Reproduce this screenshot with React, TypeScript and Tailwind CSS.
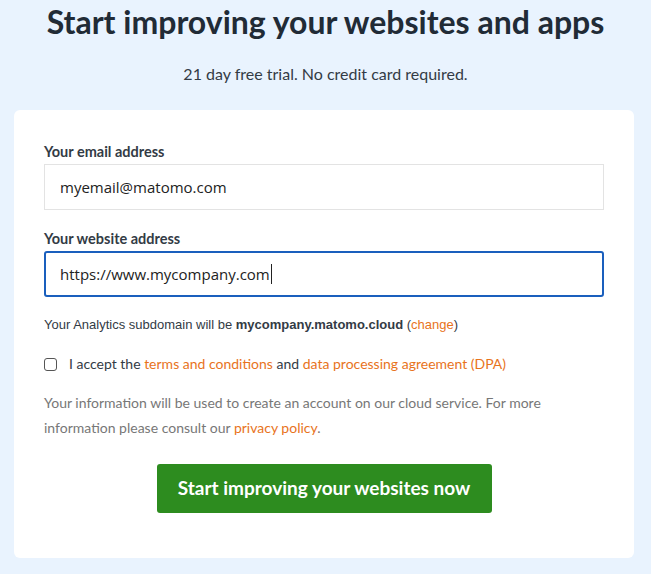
import React from "react";

const App: React.FC = () => {
  return (
    <div className="min-h-[574px] w-full bg-[#e9f3fe] pb-4" style={{ fontFamily: "Lato, 'Open Sans', sans-serif" }}>
      {/* Heading */}
      <h1 className="pt-[1px] text-center text-[32px] font-bold leading-[42px] text-[#212b36]">
        Start improving your websites and apps
      </h1>
      <p className="mt-[21px] text-center text-[16px] leading-[20px] text-[#333b45]">
        21 day free trial. No credit card required.
      </p>

      {/* Card */}
      <div className="ml-[14px] mr-[17px] mt-[26px] h-[448px] rounded-md bg-white px-[30px] pt-[33px]">
        <label className="block text-[14.5px] font-bold leading-[17px] text-[#333b45]">
          Your email address
        </label>
        <div className="mt-[4px] flex h-[46px] w-[560px] items-center border border-[#e3e3e3] px-[15px] text-[15px] text-[#222]" style={{ fontFamily: "'Open Sans', sans-serif" }}>
          myemail@matomo.com
        </div>

        <label className="mt-[20px] block text-[14.5px] font-bold leading-[17px] text-[#333b45]">
          Your website address
        </label>
        <div className="mt-[4px] flex h-[46px] w-[560px] items-center rounded-[3px] border-2 border-[#1a5fbd] px-[14px] text-[15px] text-[#222]" style={{ fontFamily: "'Open Sans', sans-serif" }}>
          https://www.mycompany.com
          <span className="ml-[1px] inline-block h-[20px] w-px bg-[#222]"></span>
        </div>

        <p className="mt-[20px] text-[13px] leading-[16px] text-[#333b45]" style={{ fontFamily: "'Liberation Sans', Arial, sans-serif" }}>
          Your Analytics subdomain will be <span className="font-bold">mycompany.matomo.cloud</span> (
          <span className="text-[#e8731c]">change</span>)
        </p>

        <div className="mt-[22px] flex items-center text-[14px] leading-[18px] text-[#333b45]">
          <span className="inline-block h-[13px] w-[13px] rounded-[3px] border border-[#555]"></span>
          <span className="ml-[12px]">
            I accept the <span className="text-[#e8731c]">terms and conditions</span> and{" "}
            <span className="text-[#e8731c]">data processing agreement (DPA)</span>
          </span>
        </div>

        <p className="mt-[17px] w-[515px] text-[14px] leading-[25px] text-[#777]">
          Your information will be used to create an account on our cloud service. For more information please consult our{" "}
          <span className="text-[#e8731c]">privacy policy</span>.
        </p>

        <div className="mt-[24px] flex justify-center">
          <button className="h-[49px] w-[335px] rounded-[3px] bg-[#2d8c1f] text-[19px] font-bold text-white">
            Start improving your websites now
          </button>
        </div>
      </div>
    </div>
  );
};

export default App;
